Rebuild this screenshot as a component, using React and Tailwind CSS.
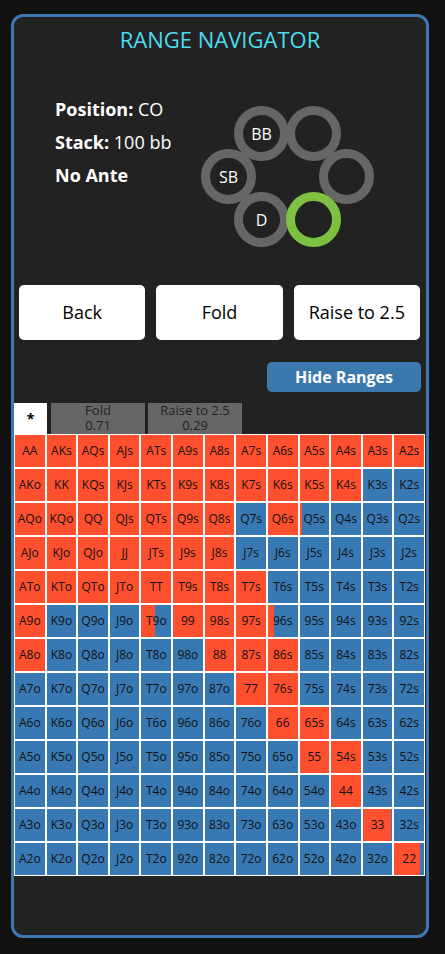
import React from 'react'

const RANKS = ['A', 'K', 'Q', 'J', 'T', '9', '8', '7', '6', '5', '4', '3', '2']

// raise frequency (0..1) for each hand, everything else folds
const RAISE = {
    AA: 1, AKs: 1, AQs: 1, AJs: 1, ATs: 1, A9s: 1, A8s: 1, A7s: 1, A6s: 1, A5s: 1, A4s: 1, A3s: 1, A2s: 1,
    AKo: 1, KK: 1, KQs: 1, KJs: 1, KTs: 1, K9s: 1, K8s: 1, K7s: 1, K6s: 1, K5s: 1, K4s: 1,
    AQo: 1, KQo: 1, QQ: 1, QJs: 1, QTs: 1, Q9s: 1, Q8s: 1, Q6s: 1, Q5s: 0.08,
    AJo: 1, KJo: 1, QJo: 1, JJ: 1, JTs: 1, J9s: 1, J8s: 1,
    ATo: 1, KTo: 1, QTo: 1, JTo: 1, TT: 1, T9s: 1, T8s: 1, T7s: 1,
    A9o: 1, T9o: 0.45, 99: 1, '98s': 1, '97s': 1, '96s': 0.2,
    A8o: 1, 88: 1, '87s': 1, '86s': 1,
    77: 1, '76s': 1,
    66: 1, '65s': 1,
    55: 1, '54s': 1,
    44: 1,
    33: 0.94,
    22: 0.86,
}

function handName(i, j) {
    if (i === j) return RANKS[i] + RANKS[j]
    if (i < j) return RANKS[i] + RANKS[j] + 's'
    return RANKS[j] + RANKS[i] + 'o'
}

const seats = [
    { label: 'BB', left: 220, top: 13 },
    { label: '', left: 272, top: 13 },
    { label: 'SB', left: 187, top: 56 },
    { label: '', left: 305, top: 56 },
    { label: 'D', left: 220, top: 99 },
    { label: '', left: 272, top: 99, active: true },
]

export default function App() {
    const cells = []
    for (let i = 0; i < 13; i++) {
        for (let j = 0; j < 13; j++) {
            const name = handName(i, j)
            cells.push({ name, freq: RAISE[name] || 0 })
        }
    }

    return (
        <div className="w-[445px] h-[954px] bg-[#111111] pt-[14px] pl-[11px] font-['Open_Sans',sans-serif]">
            <div className="w-[418px] h-[924px] border-[3px] border-[#3b79b0] rounded-[12px] bg-[#222222] flex flex-col">
                {/* Title */}
                <h1 className="mt-[8px] text-center text-[22px] leading-[28px] text-[#4ddbee]">RANGE NAVIGATOR</h1>

                {/* Info + seats */}
                <div className="relative mt-[40px] h-[160px] pl-[41px]">
                    <div className="text-[18px] leading-[33px] text-white">
                        <div><span className="font-bold">Position:</span> CO</div>
                        <div><span className="font-bold">Stack:</span> 100 bb</div>
                        <div className="font-bold">No Ante</div>
                    </div>
                    {seats.map((s, idx) => (
                        <div
                            key={idx}
                            style={{ left: s.left, top: s.top }}
                            className={`absolute w-[55px] h-[55px] rounded-full border-[9px] flex items-center justify-center text-[16px] text-white ${s.active ? 'border-[#7dc142]' : 'border-[#666666]'}`}
                        >
                            {s.label}
                        </div>
                    ))}
                </div>

                {/* Action buttons */}
                <div className="mt-[32px] pl-[5px] pr-[6px] flex gap-[11px]">
                    {['Back', 'Fold', 'Raise to 2.5'].map(t => (
                        <button key={t} className="flex-1 h-[55px] rounded-[5px] bg-white text-black text-[18px]">
                            {t}
                        </button>
                    ))}
                </div>

                <div className="mt-[22px] pr-[5px] flex justify-end">
                    <button className="w-[154px] h-[30px] rounded-[5px] bg-[#3a78ae] text-white font-bold text-[16px] leading-[30px]">
                        Hide Ranges
                    </button>
                </div>

                {/* Tabs */}
                <div className="mt-[11px] flex gap-[3px] items-end">
                    <div className="w-[33px] h-[31px] bg-white flex items-center justify-center text-[14px] font-bold text-black">*</div>
                    <div className="w-[94px] h-[31px] bg-[#666666] text-[#222222] text-[13px] leading-[15px] text-center ml-[1px]">
                        <div>Fold</div>
                        <div>0.71</div>
                    </div>
                    <div className="w-[94px] h-[31px] bg-[#666666] text-[#222222] text-[13px] leading-[15px] text-center">
                        <div>Raise to 2.5</div>
                        <div>0.29</div>
                    </div>
                </div>

                {/* Range grid */}
                <div className="w-[411px] grid grid-cols-[repeat(13,minmax(0,1fr))] gap-[2px] p-[1px] bg-white">
                    {cells.map(c => (
                        <div key={c.name} className="relative h-[32px] bg-[#3879b3] overflow-hidden">
                            <div className="absolute left-0 top-0 bottom-0 bg-[#fe4f2e]" style={{ width: `${c.freq * 100}%` }} />
                            <div className="relative h-full flex items-center justify-center text-[12px] text-[#111111]">
                                {c.name}
                            </div>
                        </div>
                    ))}
                </div>
            </div>
        </div>
    )
}
